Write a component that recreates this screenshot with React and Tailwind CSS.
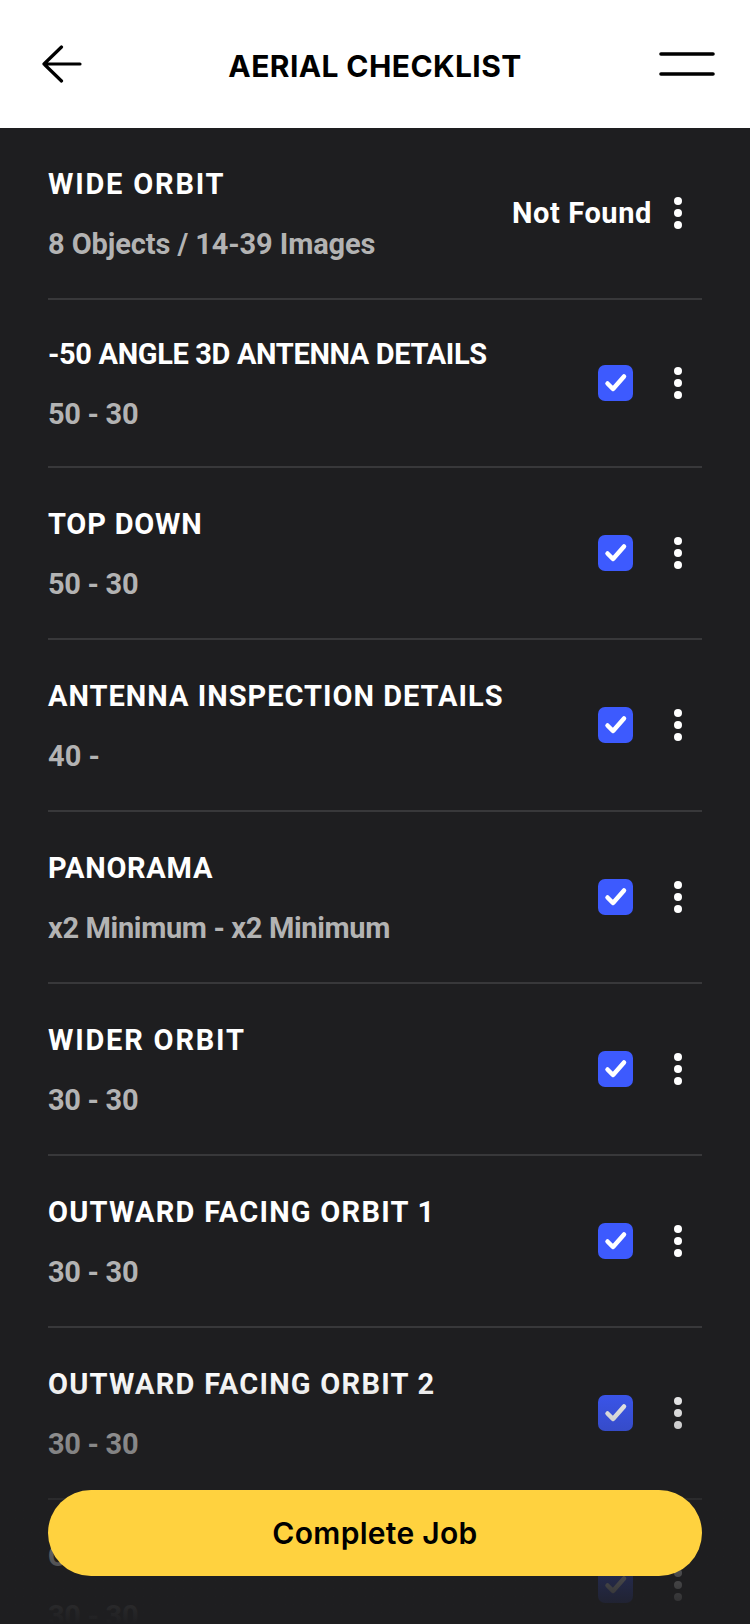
import React from "react";

const FONT = { fontFamily: "Roboto, Inter, 'Liberation Sans', sans-serif" };
const HFONT = { fontFamily: "Inter, Roboto, 'Liberation Sans', sans-serif" };

function Dots() {
  return (
    <div className="flex flex-col gap-[4px] mr-[20px]">
      <span className="block w-[8px] h-[8px] rounded-full bg-white" />
      <span className="block w-[8px] h-[8px] rounded-full bg-white" />
      <span className="block w-[8px] h-[8px] rounded-full bg-white" />
    </div>
  );
}

function Check() {
  return (
    <div className="w-[35px] h-[36px] rounded-[7px] bg-[#3d5afe] flex items-center justify-center mr-[41px]">
      <svg width="35" height="36" viewBox="0 0 35 36" fill="none">
        <path d="M9.5 18.5 L15 24 L26 11.5" stroke="white" strokeWidth="4.5" strokeLinecap="round" strokeLinejoin="round" />
      </svg>
    </div>
  );
}

const items = [
  { t: "-50 ANGLE 3D ANTENNA DETAILS", tt: "tracking-[-0.35px]", s: "50 - 30", st: "tracking-[-0.3px]", h: "h-[166px]" },
  { t: "TOP DOWN", tt: "tracking-[0.8px]", s: "50 - 30", st: "tracking-[-0.3px]", h: "h-[170px]" },
  { t: "ANTENNA INSPECTION DETAILS", tt: "tracking-[1px]", s: "40 -", st: "tracking-[0px]", h: "h-[170px]" },
  { t: "PANORAMA", tt: "tracking-[0.7px]", s: "x2 Minimum - x2 Minimum", st: "tracking-[-0.35px]", h: "h-[170px]" },
  { t: "WIDER ORBIT", tt: "tracking-[1.8px]", s: "30 - 30", st: "tracking-[-0.3px]", h: "h-[170px]" },
  { t: "OUTWARD FACING ORBIT 1", tt: "tracking-[1.25px]", s: "30 - 30", st: "tracking-[-0.3px]", h: "h-[170px]" },
  { t: "OUTWARD FACING ORBIT 2", tt: "tracking-[1.25px]", s: "30 - 30", st: "tracking-[-0.3px]", h: "h-[170px]" },
  { t: "OUTWARD FACING ORBIT 3", tt: "tracking-[1.25px]", s: "30 - 30", st: "tracking-[-0.3px]", h: "h-[170px]" },
];

export default function App() {
  return (
    <div className="relative w-[750px] h-[1624px] overflow-hidden bg-[#1e1e20]" style={FONT}>
      <header className="h-[128px] bg-white flex items-center">
        <div className="w-[120px] pl-[42px] flex items-center">
          <svg width="40" height="38" viewBox="0 0 40 38" fill="none">
            <path d="M2 19 H38 M19.5 2 L2 19 L19.5 36" stroke="black" strokeWidth="3.2" strokeLinecap="round" strokeLinejoin="round" />
          </svg>
        </div>
        <h1 className="flex-1 text-center text-[30px] leading-[40px] font-bold text-black tracking-[0.4px] mt-[3px]" style={HFONT}>AERIAL CHECKLIST</h1>
        <div className="w-[120px] pr-[35px] flex items-center justify-end">
          <svg width="56" height="28" viewBox="0 0 56 28" fill="none">
            <path d="M2 4 H54 M2 24 H54" stroke="black" strokeWidth="3.6" strokeLinecap="round" />
          </svg>
        </div>
      </header>

      <div className="px-[48px]">
        <div className="h-[170px] box-content flex items-center justify-between border-b-2 border-[#38383a]">
          <div className="flex flex-col gap-[24px] pt-[2px]">
            <div className="text-[29px] leading-[36px] font-bold text-white tracking-[1.8px]">WIDE ORBIT</div>
            <div className="text-[29px] leading-[36px] font-bold text-[#b3b3b3] tracking-[-0.1px]">8 Objects / 14-39 Images</div>
          </div>
          <div className="flex items-center">
            <span className="text-[29px] leading-[36px] font-bold text-white tracking-[0.6px] mr-[22px]">Not Found</span>
            <Dots />
          </div>
        </div>
        {items.map((it) => (
          <div key={it.t} className={`${it.h} box-content flex items-center justify-between border-b-2 border-[#38383a]`}>
            <div className="flex flex-col gap-[24px] pt-[1px]">
              <div className={`text-[29px] leading-[36px] font-bold text-white ${it.tt}`}>{it.t}</div>
              <div className={`text-[29px] leading-[36px] font-bold text-[#b3b3b3] ${it.st}`}>{it.s}</div>
            </div>
            <div className="flex items-center">
              <Check />
              <Dots />
            </div>
          </div>
        ))}
      </div>

      <div className="absolute left-0 right-0 bottom-0 h-[254px] bg-gradient-to-b from-transparent via-[#1e1e20]/50 to-[#1e1e20]" />

      <button className="absolute left-[48px] right-[48px] top-[1490px] h-[86px] rounded-full bg-[#ffd23f] flex items-center justify-center">
        <span className="text-[30px] leading-[36px] font-semibold text-black tracking-[0.3px]" style={HFONT}>Complete Job</span>
      </button>
    </div>
  );
}
